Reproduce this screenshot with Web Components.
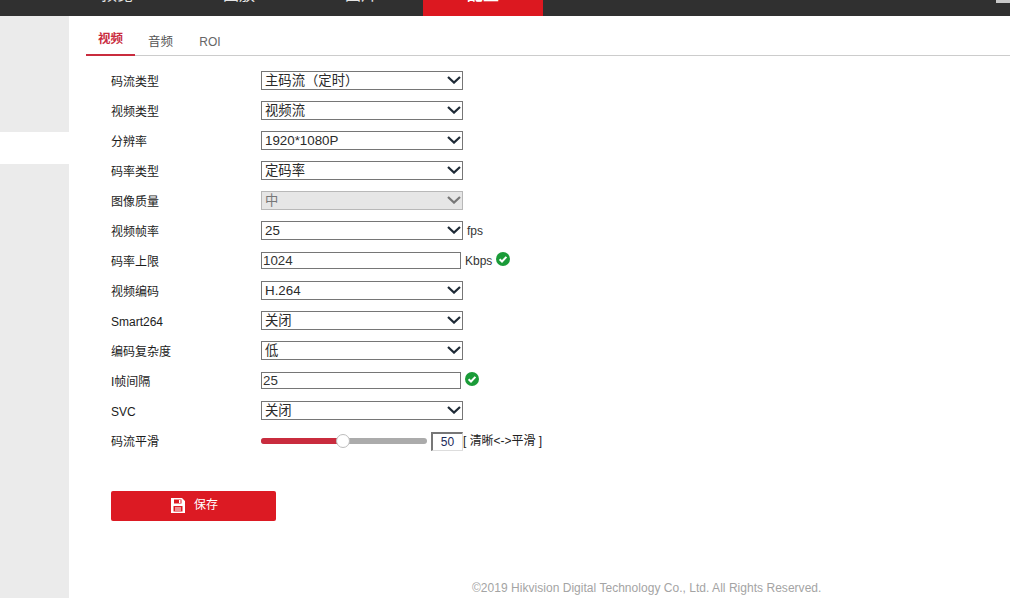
<!DOCTYPE html>
<html lang="zh">
<head>
<meta charset="utf-8">
<title>配置</title>
<style>
  html, body { margin: 0; height: 100%; overflow: hidden; }
  body { font: 12px "Liberation Sans", "Noto Sans CJK SC", sans-serif; color: #222; background: #fff; }
</style>
</head>
<body>
<hk-page>
  <hk-nav slot="nav"></hk-nav>
  <hk-side slot="side"></hk-side>
  <hk-tabs slot="tabs"></hk-tabs>

  <hk-row label="码流类型"><hk-select>主码流（定时）</hk-select></hk-row>
  <hk-row label="视频类型"><hk-select>视频流</hk-select></hk-row>
  <hk-row label="分辨率"><hk-select>1920*1080P</hk-select></hk-row>
  <hk-row label="码率类型"><hk-select>定码率</hk-select></hk-row>
  <hk-row label="图像质量"><hk-select disabled>中</hk-select></hk-row>
  <hk-row label="视频帧率"><hk-select>25</hk-select><hk-unit style="margin-left:4px">fps</hk-unit></hk-row>
  <hk-row label="码率上限"><hk-input>1024</hk-input><hk-unit>Kbps</hk-unit><hk-ok></hk-ok></hk-row>
  <hk-row label="视频编码"><hk-select>H.264</hk-select></hk-row>
  <hk-row label="Smart264"><hk-select>关闭</hk-select></hk-row>
  <hk-row label="编码复杂度"><hk-select>低</hk-select></hk-row>
  <hk-row label="I帧间隔"><hk-input>25</hk-input><hk-ok></hk-ok></hk-row>
  <hk-row label="SVC"><hk-select>关闭</hk-select></hk-row>
  <hk-row label="码流平滑"><hk-slider value="50" hint="[ 清晰<->平滑 ]"></hk-slider></hk-row>

  <hk-save slot="actions">保存</hk-save>
  <span slot="footer">©2019 Hikvision Digital Technology Co., Ltd. All Rights Reserved.</span>
</hk-page>

<script>
  // 共用的小工具：建立 open shadow root 並塞入內容
  class HkBase extends HTMLElement {
    render(html) {
      if (!this.shadowRoot) this.attachShadow({ mode: 'open' });
      this.shadowRoot.innerHTML = html;
    }
  }

  class HkPage extends HkBase {
    connectedCallback() {
      this.render(`
        <style>
          :host { display: flex; flex-direction: column; height: 598px; width: 1010px; overflow: hidden; }
          .main { flex: 1; display: flex; min-height: 0; }
          .content { flex: 1; display: flex; flex-direction: column; min-width: 0; }
          .form { padding: 9px 0 0 25px; margin-left: 17px; }
          .actions { margin: 36px 0 0 42px; }
          .footer { margin: auto 0 3px 403px; color: #a4a4a4; font-size: 12px; line-height: 14px; letter-spacing: .03px; }
        </style>
        <slot name="nav"></slot>
        <div class="main">
          <slot name="side"></slot>
          <div class="content">
            <slot name="tabs"></slot>
            <div class="form"><slot></slot></div>
            <div class="actions"><slot name="actions"></slot></div>
            <div class="footer"><slot name="footer"></slot></div>
          </div>
        </div>
      `);
    }
  }

  // 頂部導覽列，畫面往下捲過了，所以文字只露出底部
  class HkNav extends HkBase {
    connectedCallback() {
      const items = ['预览', '回放', '图片', '配置'];
      this.render(`
        <style>
          :host { display: block; height: 16px; background: #303030; overflow: hidden; position: relative; }
          .inner { display: flex; gap: 2px; padding-left: 57px; margin-top: -27px; height: 43px; }
          .item { width: 120px; text-align: center; line-height: 43px; font-size: 16px; color: #e4e4e4; }
          .item.on { background: #dc1820; color: #fff; font-weight: bold; }
          .corner { position: absolute; top: 0; right: 0; width: 14px; height: 3px; background: #c9c9c9; }
        </style>
        <div class="inner">
          ${items.map(t => `<div class="item ${t === '配置' ? 'on' : ''}">${t}</div>`).join('')}
        </div>
        <div class="corner"></div>
      `);
    }
  }

  class HkSide extends HkBase {
    connectedCallback() {
      this.render(`
        <style>
          :host { display: flex; flex-direction: column; width: 69px; flex: none; }
          .grey { background: #ebebeb; }
          .a { height: 116px; }
          .b { height: 32px; background: #fff; }
          .c { flex: 1; }
        </style>
        <div class="grey a"></div><div class="b"></div><div class="grey c"></div>
      `);
    }
  }

  class HkTabs extends HkBase {
    connectedCallback() {
      this.render(`
        <style>
          :host { display: flex; height: 39px; margin-left: 17px; border-bottom: 1px solid #ccc; align-items: flex-end; }
          .tab { box-sizing: border-box; height: 26px; line-height: 26px; color: #555; font-size: 12.5px; text-align: center; }
          .on { width: 49px; height: 28px; line-height: 22px; color: #c92c3e; font-weight: bold; border-bottom: 2px solid #c92c3e; margin-bottom: -1px; }
          .t2 { width: 51px; }
          .t3 { width: 50px; color: #666; font-size: 12px; margin-left: -1px; }
        </style>
        <div class="tab on">视频</div><div class="tab t2">音频</div><div class="tab t3">ROI</div>
      `);
    }
  }

  class HkRow extends HkBase {
    connectedCallback() {
      this.render(`
        <style>
          :host { display: flex; align-items: center; height: 30px; }
          .label { width: 150px; flex: none; padding-top: 4px; font-size: 12px; line-height: 14px; color: #1c1c1c; }
          .field { display: flex; align-items: center; }
        </style>
        <div class="label">${this.getAttribute('label')}</div>
        <div class="field"><slot></slot></div>
      `);
    }
  }

  class HkSelect extends HkBase {
    connectedCallback() {
      this.render(`
        <style>
          :host { display: flex; align-items: center; justify-content: space-between; box-sizing: border-box;
                  width: 202px; height: 19px; border: 1px solid #767676; background: #fff; padding: 0 1px 0 3px;
                  font-size: 13.33px; line-height: 15px; color: #2a2a2a; white-space: nowrap; }
          :host([disabled]) { background: #e6e6e6; border-color: #b8b8b8; color: #777; }
          svg { width: 14px; height: 8px; flex: none; stroke: #1e2a36; }
          :host([disabled]) svg { stroke: #777; }
        </style>
        <slot></slot>
        <svg viewBox="0 0 14 8" fill="none" stroke-width="2.2"><path d="M1 1l6 5.6L13 1"/></svg>
      `);
    }
  }

  class HkInput extends HkBase {
    connectedCallback() {
      this.render(`
        <style>
          :host { display: block; box-sizing: border-box; width: 200px; height: 17px; line-height: 16px;
                  border: 1px solid #767676; padding-left: 1px; font-size: 13.33px; color: #333; background: #fff; }
        </style>
        <slot></slot>
      `);
    }
  }

  class HkUnit extends HkBase {
    connectedCallback() {
      this.render(`
        <style>:host { display: block; margin-left: 4px; padding-top: 2px; font-size: 12px; line-height: 14px; color: #333; }</style>
        <slot></slot>
      `);
    }
  }

  class HkOk extends HkBase {
    connectedCallback() {
      this.render(`
        <style>:host { display: block; width: 14px; height: 14px; margin: -3px 0 0 4px; } svg { display: block; }</style>
        <svg width="14" height="14" viewBox="0 0 14 14">
          <circle cx="7" cy="7" r="7" fill="#1a9b38"/>
          <path d="M3.6 7.2l2.4 2.3 4.4-4.6" fill="none" stroke="#fff" stroke-width="2"/>
        </svg>
      `);
    }
  }

  class HkSlider extends HkBase {
    connectedCallback() {
      const value = this.getAttribute('value');
      const hint = this.getAttribute('hint').replace('<', '&lt;').replace('>', '&gt;');
      this.render(`
        <style>
          :host { display: flex; align-items: center; padding-top: 2px; }
          .track { position: relative; width: 166px; height: 6px; border-radius: 3px; background: #ababab; }
          .fill { width: 82px; height: 6px; border-radius: 3px 0 0 3px; background: #c92c3e; }
          .thumb { position: absolute; left: 75px; top: -4px; width: 14px; height: 14px; box-sizing: border-box;
                   border-radius: 50%; background: #fff; border: 1px solid #bdbdbd; }
          .box { box-sizing: border-box; width: 32px; height: 19px; margin-left: 4px; line-height: 16px; text-align: center;
                 font-size: 12px; color: #1a2a5a; border: 1px solid #ddd; border-top: 2px solid #777; border-left: 2px solid #777; background: #fff; }
          .hint { font-size: 12px; line-height: 14px; color: #222; white-space: nowrap; letter-spacing: -.02px; }
        </style>
        <div class="track"><div class="fill"></div><div class="thumb"></div></div>
        <div class="box">${value}</div>
        <div class="hint">${hint}</div>
      `);
    }
  }

  class HkSave extends HkBase {
    connectedCallback() {
      this.render(`
        <style>
          :host { display: flex; align-items: center; justify-content: center; gap: 9px; box-sizing: border-box;
                  width: 165px; height: 30px; padding: 0 0 2px 2px; border-radius: 2px; background: #dc1a23; color: #fff; font-size: 12px; line-height: 14px; }
          svg { display: block; }
        </style>
        <svg width="14" height="15" viewBox="0 0 14 15">
          <path fill="#fff" fill-rule="evenodd" d="M0 0h11l3 3v12H0zM3 1.5v4h7.5v-4zM8 2h1.5v3H8zM2.5 8v5.5h9V8zM4 9.5h6v1H4zM4 11.5h6v1H4z"/>
        </svg>
        <span><slot></slot></span>
      `);
    }
  }

  customElements.define('hk-page', HkPage);
  customElements.define('hk-nav', HkNav);
  customElements.define('hk-side', HkSide);
  customElements.define('hk-tabs', HkTabs);
  customElements.define('hk-row', HkRow);
  customElements.define('hk-select', HkSelect);
  customElements.define('hk-input', HkInput);
  customElements.define('hk-unit', HkUnit);
  customElements.define('hk-ok', HkOk);
  customElements.define('hk-slider', HkSlider);
  customElements.define('hk-save', HkSave);
</script>
</body>
</html>
